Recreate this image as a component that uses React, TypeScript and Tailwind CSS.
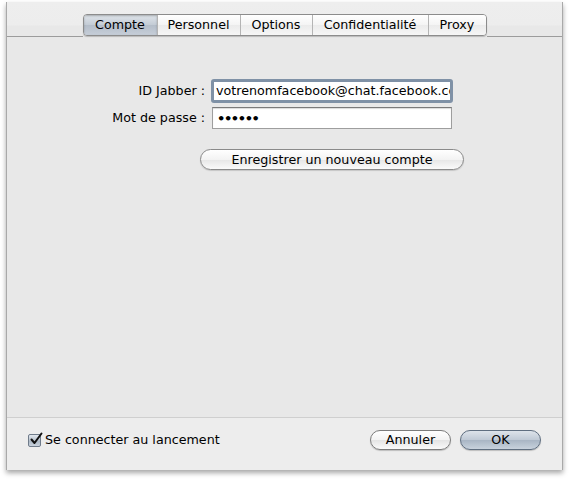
import React from "react";

const font = { fontFamily: '"DejaVu Sans", "Liberation Sans", sans-serif' };

function Tab({ label, selected, w, last }: { label: string; selected?: boolean; w: string; last?: boolean }) {
  return (
    <div
      className={`${w} h-full flex items-center justify-center text-[12.7px] text-black ${last ? "" : "border-r border-[#b4b4b4]"} ${
        selected
          ? "bg-[linear-gradient(to_bottom,#dfe4ea,#c3cbd5_50%,#b4bdc9_51%,#c6ced8)] shadow-[inset_0_1px_2px_rgba(0,0,0,0.25)]"
          : "bg-[linear-gradient(to_bottom,#ffffff,#f4f4f4_50%,#ebebeb_51%,#f6f6f6)]"
      }`}
    >
      {label}
    </div>
  );
}

export default function App() {
  return (
    <div className="w-[569px] h-[480px] bg-white pt-[2px] pl-[6px]" style={font}>
      <div className="w-[557px] h-[468px] flex flex-col border-x border-[#a9a9a9] shadow-[0_3px_5px_rgba(0,0,0,0.35)]">
        {/* header with tabs */}
        <div className="h-[46px] pt-[12px] flex items-start bg-[linear-gradient(to_bottom,#eeeeee_0,#ededed_23px,#e8e8e8_24px,#e8e8e8)]">
          <div className="flex-1 h-[23px] border-b border-[#9c9c9c]" />
          <div className="flex h-[22px] rounded-[4px] border border-[#8c8c8c] overflow-hidden shadow-[0_1px_1px_rgba(0,0,0,0.2)]">
            <Tab label="Compte" selected w="w-[74px]" />
            <Tab label="Personnel" w="w-[83px]" />
            <Tab label="Options" w="w-[72px]" />
            <Tab label="Confidentialité" w="w-[116px]" />
            <Tab label="Proxy" w="w-[57px]" last />
          </div>
          <div className="flex-1 h-[23px] border-b border-[#9c9c9c]" />
        </div>

        {/* main content */}
        <div className="flex-1 bg-[#e8e8e8] pt-[31px] flex flex-col">
          <div className="flex items-center h-[24px]">
            <div className="w-[198px] text-right text-[12.7px] text-black">ID Jabber :</div>
            <div className="ml-[6px] w-[242px] h-[24px] rounded-[3px] border-[3px] border-[#7f91a6] bg-white flex items-center overflow-hidden">
              <input
                readOnly
                value="votrenomfacebook@chat.facebook.com"
                className="w-full pl-[2px] text-[12.7px] text-black bg-transparent outline-none border-0 p-0"
                style={font}
              />
            </div>
          </div>
          <div className="flex items-center h-[22px] mt-[4px]">
            <div className="w-[198px] text-right text-[12.7px] text-black">Mot de passe :</div>
            <div className="ml-[7px] w-[240px] h-[22px] border border-[#9e9e9e] border-t-[#7a7a7a] bg-white flex items-center shadow-[inset_0_1px_1px_rgba(0,0,0,0.15)]">
              <span className="pl-[4px] text-[13px] text-black tracking-[-1.4px] font-bold leading-none">••••••</span>
            </div>
          </div>
          <div className="mt-[20px] ml-[193px] w-[264px] h-[21px] rounded-full border border-[#8a8a8a] bg-[linear-gradient(to_bottom,#ffffff,#f3f3f3_50%,#e6e6e6_51%,#fafafa)] flex items-center justify-center text-[12.7px] text-black shadow-[0_1px_1px_rgba(0,0,0,0.15)]">
            Enregistrer un nouveau compte
          </div>
        </div>

        {/* bottom bar */}
        <div className="h-[53px] bg-[#ededed] border-t border-[#cfcfcf] flex items-center pl-[21px] pr-[21px] pb-[8px]">
          <div className="w-[13px] h-[13px] rounded-[2px] border border-[#6f7b8a] bg-[linear-gradient(to_bottom,#e3e8ee,#b9c3ce_50%,#a9b5c3_51%,#c9d2dc)] relative">
            <svg viewBox="0 0 14 14" className="absolute left-[0px] top-[-3px] w-[14px] h-[14px]">
              <path d="M2.5 7.5 L5.5 11 L12.5 1.5" fill="none" stroke="#111" strokeWidth="2" strokeLinecap="round" strokeLinejoin="round" />
            </svg>
          </div>
          <span className="ml-[4px] text-[12.7px] text-black">Se connecter au lancement</span>
          <div className="flex-1" />
          <div className="w-[81px] h-[20px] rounded-full border border-[#7c7c7c] bg-[linear-gradient(to_bottom,#ffffff,#f3f3f3_50%,#e4e4e4_51%,#fafafa)] flex items-center justify-center text-[12.7px] text-black shadow-[0_1px_1px_rgba(0,0,0,0.2)]">
            Annuler
          </div>
          <div className="ml-[9px] w-[81px] h-[20px] rounded-full border border-[#5f6e80] bg-[linear-gradient(to_bottom,#dde3ea,#bfc9d5_50%,#a8b5c4_51%,#c8d2dd)] flex items-center justify-center text-[12.7px] text-black shadow-[0_1px_1px_rgba(0,0,0,0.2)]">
            OK
          </div>
        </div>
      </div>
    </div>
  );
}
